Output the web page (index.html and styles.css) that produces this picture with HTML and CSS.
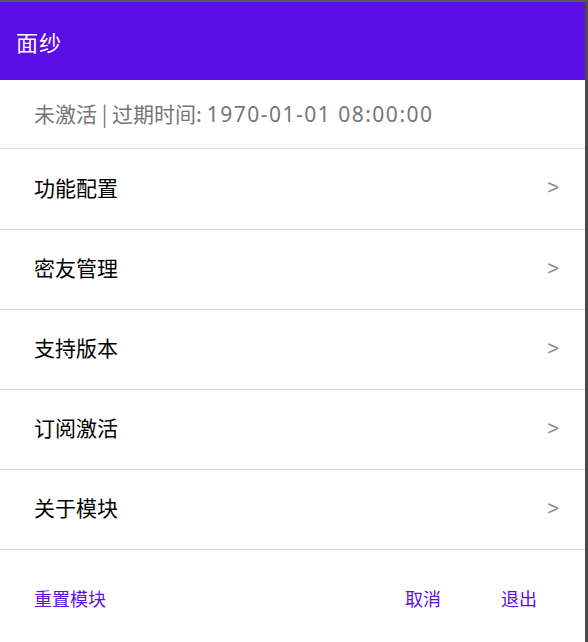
FILE: index.html
```html
<!DOCTYPE html>
<html lang="zh">
<head>
    <meta charset="UTF-8">
    <meta name="viewport" content="width=device-width, initial-scale=1.0">
    <title>面纱</title>
    <link rel="stylesheet" href="styles.css">
</head>
<body>

    <div class="dialog">
        <div class="header">面纱</div>

        <div class="status">未激活 | 过期时间: <span class="date">1970-01-01 08:00:00</span></div>

        <div class="menu">
            <div class="item"><span>功能配置</span><span class="arrow">&gt;</span></div>
            <div class="item"><span>密友管理</span><span class="arrow">&gt;</span></div>
            <div class="item"><span>支持版本</span><span class="arrow">&gt;</span></div>
            <div class="item"><span>订阅激活</span><span class="arrow">&gt;</span></div>
            <div class="item"><span>关于模块</span><span class="arrow">&gt;</span></div>
        </div>

        <div class="actions">
            <button class="btn">重置模块</button>
            <span class="spacer"></span>
            <button class="btn">取消</button>
            <button class="btn btn-last">退出</button>
        </div>
    </div>

</body>
</html>
```

FILE: styles.css
```css
html, body {
    margin: 0;
    padding: 0;
    height: 100%;
}
body {
    font-family: "Noto Sans CJK SC", "Noto Sans", sans-serif;
    background-color: #fff;
}
.dialog {
    box-sizing: border-box;
    height: 642px;
    border-top: 2px solid #5a5a5a;
    border-right: 3px solid #4a4a4a;
    background-color: #fff;
}
.header {
    height: 78px;
    background-color: #5a0de6;
    color: #fff;
    font-size: 22px;
    line-height: 78px;
    padding-left: 16px;
    letter-spacing: 1px;
}
.status {
    height: 68px;
    line-height: 66px;
    padding-left: 34px;
    font-size: 21px;
    color: #767676;
    border-bottom: 1px solid #dcdcdc;
}
.status .date {
    font-family: "Noto Sans", sans-serif;
    letter-spacing: 1.5px;
}
.item {
    box-sizing: border-box;
    display: flex;
    justify-content: space-between;
    align-items: center;
    height: 80px;
    padding: 0 26px 4px 34px;
    font-size: 21px;
    line-height: 1;
    color: #000;
    border-bottom: 1px solid #dcdcdc;
}
.item:first-child {
    height: 81px;
}
.arrow {
    color: #8a8a8a;
    font-family: "Liberation Sans", sans-serif;
    font-size: 20px;
}
.actions {
    display: flex;
    align-items: center;
    height: 96px;
    padding: 0 0 0 34px;
}
.spacer {
    flex: 1;
}
.btn {
    background: none;
    border: none;
    padding: 0;
    font-family: inherit;
    font-size: 18px;
    color: #5d12dc;
    cursor: pointer;
}
.btn + .btn {
    margin-left: 60px;
}
.btn-last {
    margin-right: 48px;
}
```
